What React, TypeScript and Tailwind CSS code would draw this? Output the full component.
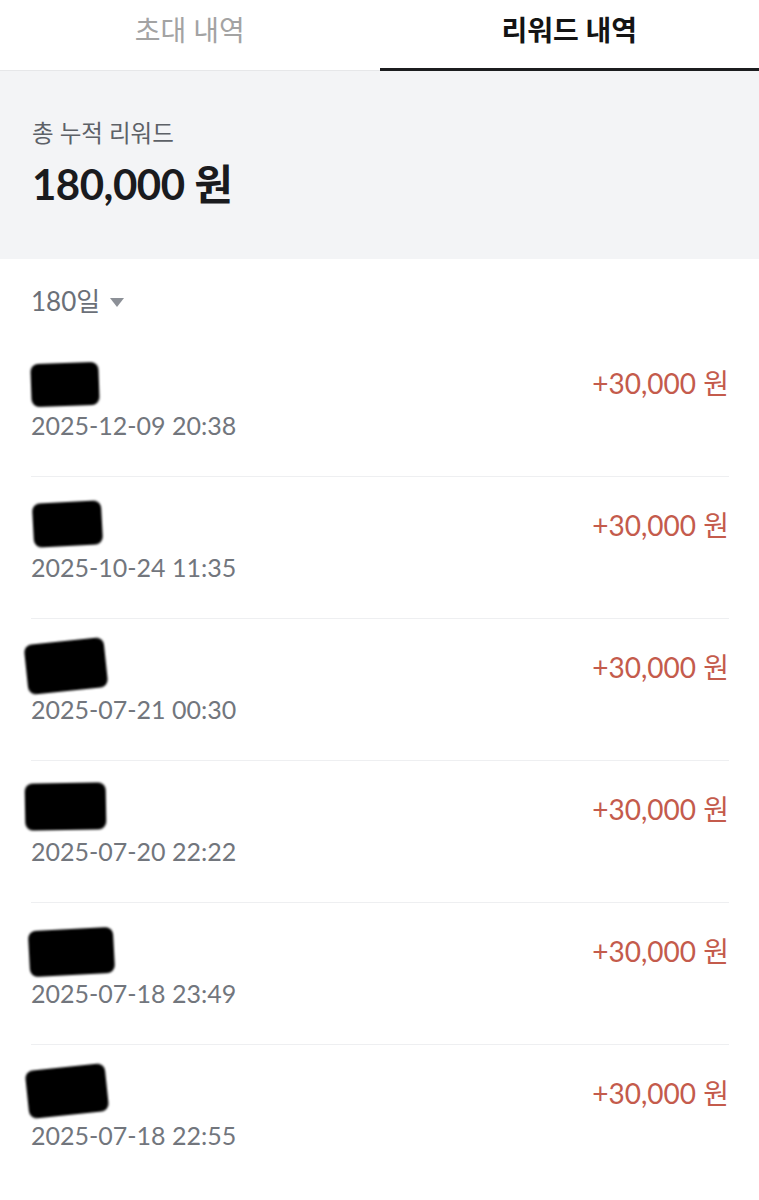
const FONT = "font-['Lato','Noto_Sans_CJK_KR',sans-serif]"

/* ── Data ──────────────────────────────────────────── */

interface RewardItem {
  date: string
  amount: string
  blob: string
}

// redaction blobs differ per row, so each keeps its own size / offset
const REWARDS: RewardItem[] = [
  { date: '2025-12-09 20:38', amount: '+30,000 원', blob: 'mt-[6px] ml-0 h-[43px] w-[68px] -rotate-2' },
  { date: '2025-10-24 11:35', amount: '+30,000 원', blob: 'mt-[3px] ml-[2px] h-[44px] w-[69px] -rotate-3' },
  { date: '2025-07-21 00:30', amount: '+30,000 원', blob: 'mt-0 -ml-[5px] h-[50px] w-[80px] -rotate-6' },
  { date: '2025-07-20 22:22', amount: '+30,000 원', blob: 'mt-0 -ml-[6px] h-[47px] w-[81px] -rotate-1' },
  { date: '2025-07-18 23:49', amount: '+30,000 원', blob: 'mt-[4px] -ml-[2px] h-[46px] w-[85px] -rotate-3' },
  { date: '2025-07-18 22:55', amount: '+30,000 원', blob: 'mt-0 -ml-[4px] h-[48px] w-[80px] -rotate-6' },
]

/* ── Components ────────────────────────────────────── */

function Tabs() {
  return (
    <div className="flex h-[71px] border-b border-[#e6e7e9]">
      <button className="flex flex-1 items-center justify-center pb-[10px] text-[28px] text-[#a3a3a3]">
        초대 내역
      </button>
      <button className="relative flex flex-1 items-center justify-center pb-[10px] text-[28px] font-bold text-[#141414]">
        리워드 내역
        <span className="absolute inset-x-0 -bottom-px h-[3px] bg-[#1c1d1f]" />
      </button>
    </div>
  )
}

function Summary() {
  return (
    <div className="h-[188px] bg-[#f3f4f6] px-[32px] pt-[46px]">
      <p className="text-[23.5px] leading-[32px] text-[#5d6167]">총 누적 리워드</p>
      <p className="mt-[10px] text-[42px] font-bold leading-[50px] tracking-[-0.5px] text-[#1a1b1e]">
        180,000 원
      </p>
    </div>
  )
}

function PeriodFilter() {
  return (
    <div className="flex h-[76px] items-center gap-[10px] px-[31px] pt-[8px]">
      <span className="text-[26px] text-[#6b7078]">180일</span>
      <svg width="14" height="9" viewBox="0 0 14 9" className="mt-[2px]">
        <path d="M0 0h14L7 9z" fill="#8c9097" />
      </svg>
    </div>
  )
}

function RewardRow({ item }: Readonly<{ item: RewardItem }>) {
  return (
    <div className="flex h-[142px] justify-between border-b border-[#eeeff1] pt-[22px] last:border-b-0">
      <div className="flex flex-col">
        <div className="h-[53px]">
          <div className={`rounded-[8px] bg-black blur-[1px] ${item.blob}`} />
        </div>
        <span className="text-[25px] leading-[30px] text-[#72767d]">{item.date}</span>
      </div>
      <span className="mt-[11px] text-[28px] leading-[30px] text-[#c45b4c]">{item.amount}</span>
    </div>
  )
}

export default function App() {
  return (
    <div className={`min-h-[1200px] w-[759px] bg-white ${FONT}`}>
      <Tabs />
      <Summary />
      <PeriodFilter />
      <div className="pl-[31px] pr-[30px]">
        {REWARDS.map((item) => (
          <RewardRow key={item.date} item={item} />
        ))}
      </div>
    </div>
  )
}
